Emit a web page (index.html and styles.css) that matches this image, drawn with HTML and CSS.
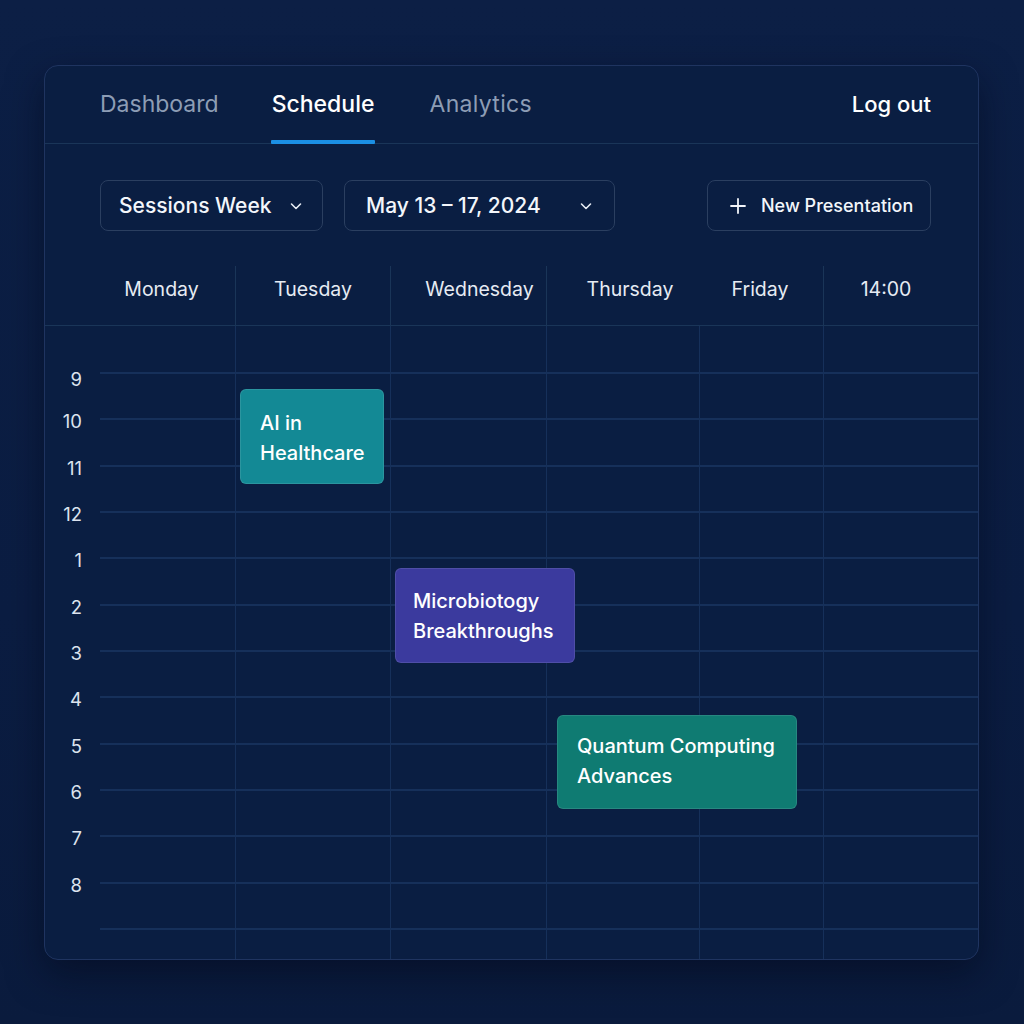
FILE: index.html
```html
<!DOCTYPE html>
<html>
<head>
<meta charset="utf-8">
<link rel="stylesheet" href="styles.css">
</head>
<body>
<div class="card">
  <nav class="nav">
    <div class="tabs">
      <span class="tab">Dashboard</span>
      <span class="tab active">Schedule</span>
      <span class="tab">Analytics</span>
    </div>
    <span class="logout">Log out</span>
  </nav>

  <div class="controls">
    <button class="select sel-week">Sessions Week
      <svg class="chev" width="14" height="14" viewBox="0 0 14 14"><path d="M2.5 5l4.5 4.5L11.5 5" fill="none" stroke="#e8edf5" stroke-width="1.6" stroke-linecap="round" stroke-linejoin="round"/></svg>
    </button>
    <button class="select sel-date">May 13 – 17, 2024
      <svg class="chev" width="14" height="14" viewBox="0 0 14 14"><path d="M2.5 5l4.5 4.5L11.5 5" fill="none" stroke="#e8edf5" stroke-width="1.6" stroke-linecap="round" stroke-linejoin="round"/></svg>
    </button>
    <span class="spacer"></span>
    <button class="newbtn">
      <svg width="16" height="16" viewBox="0 0 16 16"><path d="M8 1v14M1 8h14" stroke="#f2f5fa" stroke-width="1.8" stroke-linecap="round"/></svg>
      New Presentation
    </button>
  </div>

  <div class="head">
    <span class="hd"></span>
    <span class="hd hd-mon">Monday</span>
    <span class="hd hd-tue line">Tuesday</span>
    <span class="hd hd-wed line">Wednesday</span>
    <span class="hd hd-thu line">Thursday</span>
    <span class="hd hd-fri">Friday</span>
    <span class="hd hd-ex line">14:00</span>
  </div>

  <div class="grid">
    <div class="row first"><span class="lbl"></span><i></i><i></i><i></i><i></i><i></i><i></i></div>
    <div class="row"><span class="lbl lbl-first">9</span><i></i><i></i><i></i><i></i><i></i><i></i></div>
    <div class="row"><span class="lbl">10</span><i></i><i></i><i></i><i></i><i></i><i></i></div>
    <div class="row"><span class="lbl">11</span><i></i><i></i><i></i><i></i><i></i><i></i></div>
    <div class="row"><span class="lbl">12</span><i></i><i></i><i></i><i></i><i></i><i></i></div>
    <div class="row"><span class="lbl">1</span><i></i><i></i><i></i><i></i><i></i><i></i></div>
    <div class="row"><span class="lbl">2</span><i></i><i></i><i></i><i></i><i></i><i></i></div>
    <div class="row"><span class="lbl">3</span><i></i><i></i><i></i><i></i><i></i><i></i></div>
    <div class="row"><span class="lbl">4</span><i></i><i></i><i></i><i></i><i></i><i></i></div>
    <div class="row"><span class="lbl">5</span><i></i><i></i><i></i><i></i><i></i><i></i></div>
    <div class="row"><span class="lbl">6</span><i></i><i></i><i></i><i></i><i></i><i></i></div>
    <div class="row"><span class="lbl">7</span><i></i><i></i><i></i><i></i><i></i><i></i></div>
    <div class="row"><span class="lbl">8</span><i></i><i></i><i></i><i></i><i></i><i></i></div>
    <div class="row tail"><span class="lbl"></span><i></i><i></i><i></i><i></i><i></i><i></i></div>

    <div class="event ev-ai">AI in<br>Healthcare</div>
    <div class="event ev-micro">Microbiotogy<br>Breakthroughs</div>
    <div class="event ev-quantum">Quantum Computing<br>Advances</div>
  </div>
</div>
</body>
</html>
```

FILE: styles.css
```css
* { box-sizing: border-box; }
html, body { margin: 0; padding: 0; }
body {
  width: 1024px;
  height: 1024px;
  overflow: hidden;
  background: linear-gradient(180deg, #0c1f45 0%, #0b1d42 60%, #0a1b3d 100%);
  font-family: Inter, "Noto Sans", "Liberation Sans", sans-serif;
  color: #eef2f8;
}
.card {
  margin: 65px 0 0 44px;
  width: 935px;
  height: 895px;
  background: #0a1e42;
  border: 1px solid #1f3460;
  border-radius: 14px;
  box-shadow: 0 14px 36px rgba(3, 10, 28, 0.55);
  overflow: hidden;
  display: flex;
  flex-direction: column;
}
.nav {
  height: 78px;
  flex: none;
  display: flex;
  align-items: center;
  justify-content: space-between;
  padding: 0 47px 0 55px;
  border-bottom: 1px solid #1a3558;
}
.tabs { display: flex; gap: 53px; height: 100%; }
.tab {
  position: relative;
  display: flex;
  align-items: center;
  font-size: 23px;
  color: #8d9db5;
  padding-bottom: 2px;
}
.tab:nth-child(3) { margin-left: 2px; letter-spacing: 0.3px; }
.tab.active { color: #ffffff; font-weight: 500; }
.tab.active::after {
  content: "";
  position: absolute;
  left: -1px;
  right: -1px;
  bottom: -1px;
  height: 4px;
  background: #1b8fe4;
  border-radius: 1px;
}
.logout { font-size: 22px; font-weight: 500; color: #ffffff; padding-bottom: 2px; }

.controls {
  flex: none;
  display: flex;
  align-items: center;
  gap: 21px;
  margin: 36px 47px 0 55px;
  height: 51px;
}
.spacer { flex: 1; }
.select, .newbtn {
  height: 51px;
  background: #0a1e42;
  border: 1px solid #2b3f60;
  border-radius: 8px;
  color: #f3f6fb;
  font-family: inherit;
  display: flex;
  align-items: center;
  padding: 0;
}
.select { font-size: 21px; font-weight: 500; }
.sel-week { width: 223px; padding-left: 18px; }
.sel-week .chev { margin-left: 18px; }
.sel-date { width: 271px; padding-left: 21px; }
.sel-date .chev { margin-left: 38px; }
.newbtn { width: 224px; padding-left: 22px; font-size: 18px; font-weight: 500; gap: 15px; }

.head {
  flex: none;
  margin-top: 35px;
  height: 60px;
  display: grid;
  grid-template-columns: 55px 135px 155px 156px 153px 124px 1fr;
  border-bottom: 1px solid #1a3558;
}
.hd {
  display: flex;
  align-items: center;
  justify-content: center;
  font-size: 19.5px;
  color: #e6ebf3;
  padding-bottom: 14px;
}
.hd.line { border-left: 1px solid #1a3558; }
.hd-mon { padding-right: 12px; }
.hd-wed { padding-left: 22px; }
.hd-thu { padding-left: 14px; }
.hd-fri { padding-right: 2px; }
.hd-ex { padding-right: 30px; }

.grid {
  position: relative;
  flex: 1;
  display: flex;
  flex-direction: column;
}
.row {
  display: grid;
  grid-template-columns: 55px 135px 155px 156px 153px 124px 1fr;
  height: 46.35px;
  flex: none;
}
.row.first { height: 46px; }
.row.tail { flex: 1; }
.row i { border-top: 2px solid #16305a; }
.row.first i { border-top: none; }
.row i + i { border-left: 1px solid #16305a; }
.lbl {
  font-size: 18.5px;
  color: #dce3ee;
  text-align: right;
  padding-right: 18px;
  line-height: 20px;
  margin-top: -7px;
}
.lbl.lbl-first { margin-top: -3px; }

.event {
  position: absolute;
  border-radius: 6px;
  padding: 17px 0 0 19px;
  font-size: 20px;
  font-weight: 500;
  line-height: 30px;
  color: #ffffff;
  white-space: nowrap;
  border: 1px solid rgba(255, 255, 255, 0.10);
}
.ev-ai { left: 195px; top: 63px; width: 144px; height: 95px; background: #138995; padding-top: 18px; }
.ev-micro { left: 350px; top: 242px; width: 180px; height: 95px; background: #3b3a9e; padding-left: 17px; }
.ev-quantum { left: 512px; top: 389px; width: 240px; height: 94px; background: #0f7b72; padding-top: 15px; }
```
